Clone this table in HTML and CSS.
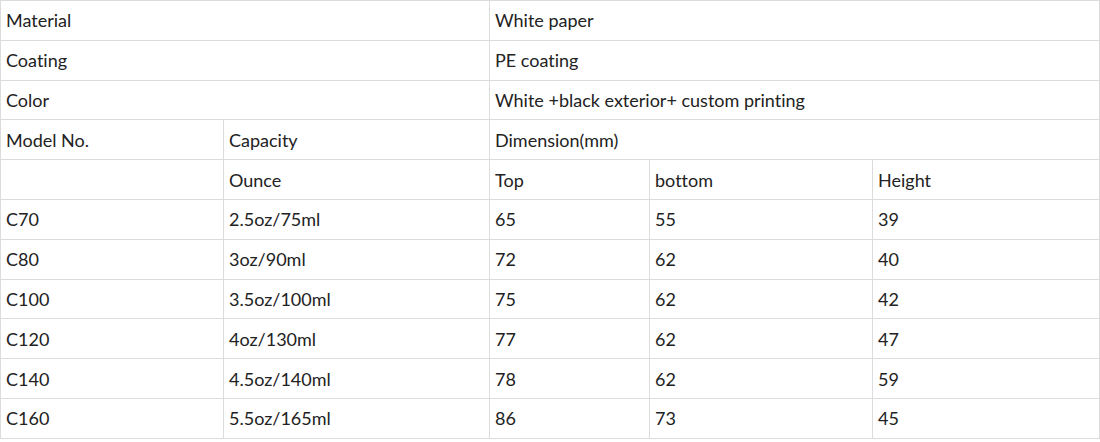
FILE: index.html
```html
<!DOCTYPE html>
<html>
<head>
<meta charset="utf-8">
<link rel="stylesheet" href="styles.css">
</head>
<body>
<table class="spec">
  <colgroup>
    <col class="c1"><col class="c2"><col class="c3"><col class="c4"><col class="c5">
  </colgroup>
  <tbody>
    <tr><td colspan="2">Material</td><td colspan="3">White paper</td></tr>
    <tr><td colspan="2">Coating</td><td colspan="3">PE coating</td></tr>
    <tr><td colspan="2">Color</td><td colspan="3">White +black exterior+ custom printing</td></tr>
    <tr><td>Model No.</td><td>Capacity</td><td colspan="3">Dimension(mm)</td></tr>
    <tr><td></td><td>Ounce</td><td>Top</td><td>bottom</td><td>Height</td></tr>
    <tr><td>C70</td><td>2.5oz/75ml</td><td>65</td><td>55</td><td>39</td></tr>
    <tr><td>C80</td><td>3oz/90ml</td><td>72</td><td>62</td><td>40</td></tr>
    <tr><td>C100</td><td>3.5oz/100ml</td><td>75</td><td>62</td><td>42</td></tr>
    <tr><td>C120</td><td>4oz/130ml</td><td>77</td><td>62</td><td>47</td></tr>
    <tr><td>C140</td><td>4.5oz/140ml</td><td>78</td><td>62</td><td>59</td></tr>
    <tr><td>C160</td><td>5.5oz/165ml</td><td>86</td><td>73</td><td>45</td></tr>
  </tbody>
</table>
</body>
</html>
```

FILE: styles.css
```css
html, body {
  margin: 0;
  padding: 0;
  background: #fff;
}
body {
  font-family: Lato, "Liberation Sans", sans-serif;
  font-size: 18px;
  color: #222;
  font-variant-ligatures: none;
  font-feature-settings: "liga" 0, "clig" 0, "calt" 0, "dlig" 0;
}
.spec {
  border-collapse: collapse;
  table-layout: fixed;
  width: 1099px;
}
.c1 { width: 223px; }
.c2 { width: 266px; }
.c3 { width: 160px; }
.c4 { width: 223px; }
.c5 { width: 227px; }
.spec td {
  border: 1px solid #dcdcdc;
  height: 39.8px;
  padding: 0 5px;
  vertical-align: middle;
  line-height: 22px;
  box-sizing: border-box;
}
```
